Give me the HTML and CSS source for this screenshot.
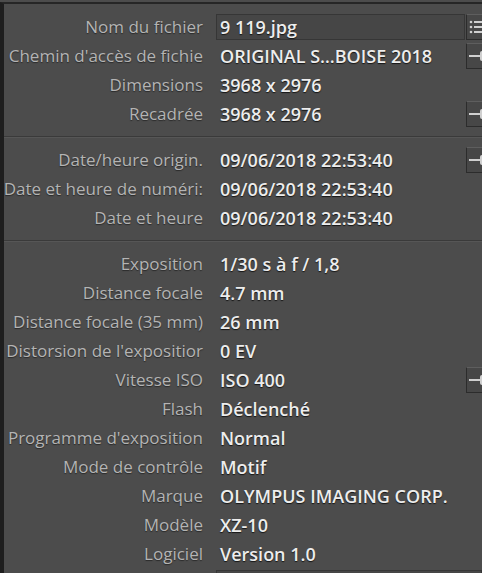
FILE: index.html
```html
<!DOCTYPE html>
<html lang="fr">
<head>
	<meta charset="UTF-8">
	<title>Métadonnées</title>
	<link rel="stylesheet" href="styles.css">
</head>
<body>
	<div class="panel">
		<div class="group">
			<div class="row">
				<span class="label">Nom du fichier</span>
				<span class="value field">9 119.jpg</span>
				<span class="btn"><svg width="22" height="24" viewBox="0 0 22 24"><g fill="#d0d0d0"><circle cx="4" cy="7" r="1.3"/><circle cx="4" cy="12" r="1.3"/><circle cx="4" cy="17" r="1.3"/><rect x="7" y="6" width="15" height="2"/><rect x="7" y="11" width="15" height="2"/><rect x="7" y="16" width="15" height="2"/></g></svg></span>
			</div>
			<div class="row">
				<span class="label">Chemin d'accès de fichie</span>
				<span class="value">ORIGINAL S…BOISE 2018</span>
				<span class="btn"><svg width="22" height="24" viewBox="0 0 22 24"><rect x="2" y="11" width="12" height="2" fill="#d0d0d0"/><rect x="13" y="7" width="6" height="10" rx="2" fill="#d0d0d0"/></svg></span>
			</div>
			<div class="row">
				<span class="label">Dimensions</span>
				<span class="value">3968 x 2976</span>
			</div>
			<div class="row">
				<span class="label">Recadrée</span>
				<span class="value">3968 x 2976</span>
				<span class="btn"><svg width="22" height="24" viewBox="0 0 22 24"><rect x="2" y="11" width="12" height="2" fill="#d0d0d0"/><rect x="13" y="7" width="6" height="10" rx="2" fill="#d0d0d0"/></svg></span>
			</div>
		</div>
		<div class="group">
			<div class="row">
				<span class="label">Date/heure origin.</span>
				<span class="value">09/06/2018 22:53:40</span>
				<span class="btn"><svg width="22" height="24" viewBox="0 0 22 24"><rect x="2" y="11" width="12" height="2" fill="#d0d0d0"/><rect x="13" y="7" width="6" height="10" rx="2" fill="#d0d0d0"/></svg></span>
			</div>
			<div class="row">
				<span class="label">Date et heure de numéri:</span>
				<span class="value">09/06/2018 22:53:40</span>
			</div>
			<div class="row">
				<span class="label">Date et heure</span>
				<span class="value">09/06/2018 22:53:40</span>
			</div>
		</div>
		<div class="group last">
			<div class="row">
				<span class="label">Exposition</span>
				<span class="value">1/30 s à f / 1,8</span>
			</div>
			<div class="row">
				<span class="label">Distance focale</span>
				<span class="value">4.7 mm</span>
			</div>
			<div class="row">
				<span class="label">Distance focale (35 mm)</span>
				<span class="value">26 mm</span>
			</div>
			<div class="row">
				<span class="label">Distorsion de l'expositior</span>
				<span class="value">0 EV</span>
			</div>
			<div class="row">
				<span class="label">Vitesse ISO</span>
				<span class="value">ISO 400</span>
				<span class="btn"><svg width="22" height="24" viewBox="0 0 22 24"><rect x="2" y="11" width="12" height="2" fill="#d0d0d0"/><rect x="13" y="7" width="6" height="10" rx="2" fill="#d0d0d0"/></svg></span>
			</div>
			<div class="row">
				<span class="label">Flash</span>
				<span class="value">Déclenché</span>
			</div>
			<div class="row">
				<span class="label">Programme d'exposition</span>
				<span class="value">Normal</span>
			</div>
			<div class="row">
				<span class="label">Mode de contrôle</span>
				<span class="value">Motif</span>
			</div>
			<div class="row">
				<span class="label">Marque</span>
				<span class="value">OLYMPUS IMAGING CORP.</span>
			</div>
			<div class="row">
				<span class="label">Modèle</span>
				<span class="value">XZ-10</span>
			</div>
			<div class="row">
				<span class="label">Logiciel</span>
				<span class="value">Version 1.0</span>
			</div>
			<div class="row">
				<span class="label"></span>
				<span class="value field"></span>
			</div>
		</div>
	</div>
</body>
</html>
```

FILE: styles.css
```css
*{ margin: 0; padding: 0; box-sizing: border-box;}
html, body{ height: 100%; overflow: hidden;}
body{ background: #4c4c4c; padding-top: 2px; font-family: "Open Sans", "Liberation Sans", sans-serif; font-size: 17px;}
.panel{ height: 100%; border-top: 2px solid #262626; border-left: 4px solid #1e1e1e;}
.group{ padding: 8px 0 8px; border-bottom: 1px solid #3a3a3a; box-shadow: 0 1px 0 #565656;}
.group.last{ border-bottom: 0; box-shadow: none;}
.row{ display: flex; align-items: center; height: 29px;}
.label{ width: 201px; flex: none; margin-left: -2px; text-align: right; color: #b4b4b4; white-space: nowrap; text-shadow: 0 1px 1px #2a2a2a;}
.value{ flex: 1; margin-left: 13px; padding-left: 4px; height: 26px; line-height: 26px; color: #ededed; font-size: 18px; font-weight: 600; white-space: nowrap; text-shadow: 0 1px 1px #151515;}
.field{ background: #464646; border: 1px solid #363636; line-height: 24px; padding-left: 3px;}
.btn{ flex: none; width: 24px; height: 26px; margin-left: 1px; margin-right: -8px; border: 1px solid #2c2c2c; border-top-color: #5e5e5e; background: #474747; display: flex; align-items: center;}
.btn svg{ display: block;}
```
